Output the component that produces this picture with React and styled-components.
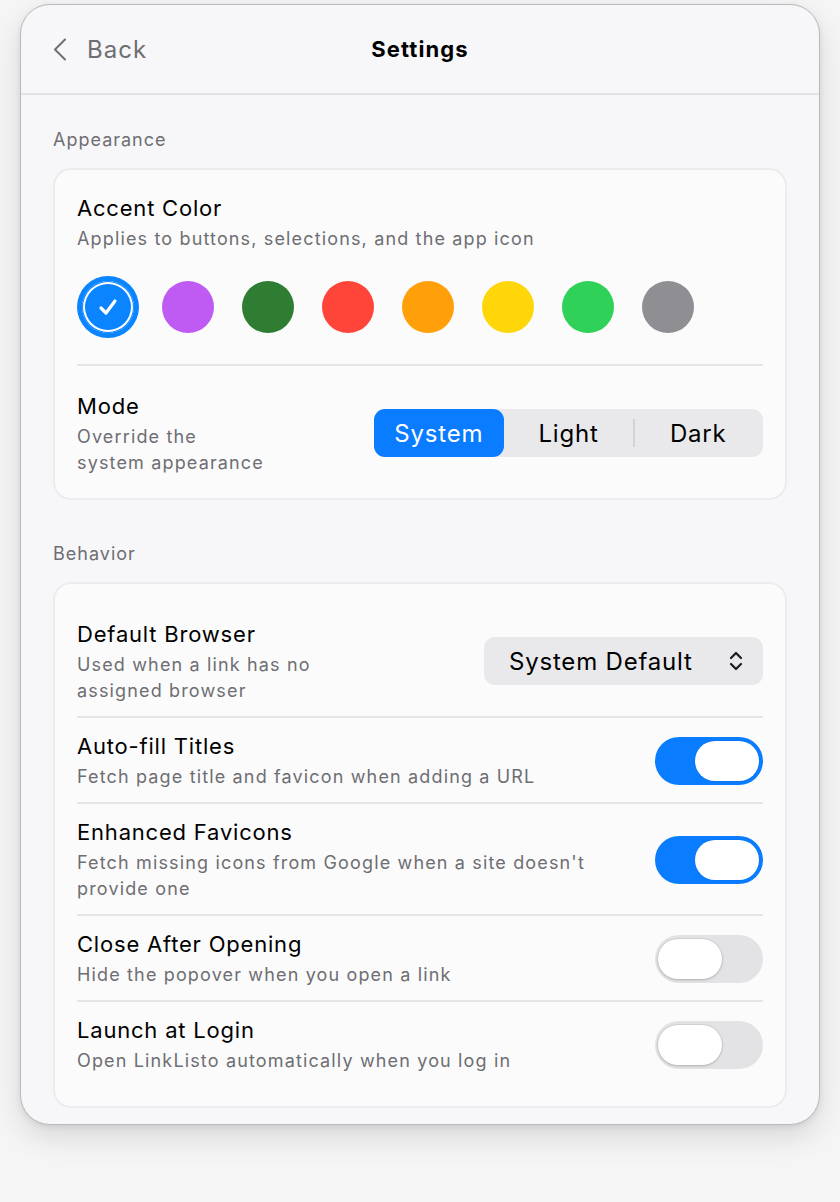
import React from 'react';
import styled, { createGlobalStyle } from 'styled-components';

const GlobalStyle = createGlobalStyle`
  html, body {
    margin: 0;
    padding: 0;
    background: #f5f5f6;
    font-family: Inter, "Noto Sans", sans-serif;
    -webkit-font-smoothing: antialiased;
  }
`;

const BLUE = '#0a7cff';

const SWATCHES = [
  '#0a84ff',
  '#bf5af2',
  '#2e7d32',
  '#ff453a',
  '#ff9f0a',
  '#ffd60a',
  '#30d158',
  '#8e8e93',
];

const BEHAVIOR = [
  {
    title: 'Auto-fill Titles',
    subtitle: 'Fetch page title and favicon when adding a URL',
    on: true,
  },
  {
    title: 'Enhanced Favicons',
    subtitle: (
      <>
        Fetch missing icons from Google when a site doesn&apos;t
        <br />
        provide one
      </>
    ),
    on: true,
  },
  {
    title: 'Close After Opening',
    subtitle: 'Hide the popover when you open a link',
    on: false,
  },
  {
    title: 'Launch at Login',
    subtitle: 'Open LinkListo automatically when you log in',
    on: false,
  },
];

const App = () => {
  const [accent, setAccent] = React.useState(0);
  const [mode, setMode] = React.useState('System');
  const [toggles, setToggles] = React.useState(BEHAVIOR.map(b => b.on));

  return (
    <Page>
      <GlobalStyle />
      <Window>
        <Header>
          <BackButton>
            <svg width="16" height="24" viewBox="0 0 16 24" fill="none">
              <path
                d="M13 2 L3 12 L13 22"
                stroke="#6e6e73"
                strokeWidth="2"
                strokeLinecap="round"
                strokeLinejoin="round"
              />
            </svg>
            <span>Back</span>
          </BackButton>
          <Title>Settings</Title>
        </Header>

        <Content>
          <SectionLabel>Appearance</SectionLabel>
          <Card>
            <AccentBlock>
              <RowTitle>Accent Color</RowTitle>
              <RowSub>Applies to buttons, selections, and the app icon</RowSub>
              <Swatches>
                {SWATCHES.map((c, i) => (
                  <Swatch
                    key={c}
                    $color={c}
                    $selected={accent === i}
                    onClick={() => setAccent(i)}
                  >
                    {accent === i && (
                      <svg width="24" height="24" viewBox="0 0 24 24" fill="none">
                        <path
                          d="M5 13 L10 18 L19 6"
                          stroke="#fff"
                          strokeWidth="3.2"
                          strokeLinecap="round"
                          strokeLinejoin="round"
                        />
                      </svg>
                    )}
                  </Swatch>
                ))}
              </Swatches>
            </AccentBlock>
            <ModeRow>
              <TextCol>
                <RowTitle>Mode</RowTitle>
                <RowSub>
                  Override the
                  <br />
                  system appearance
                </RowSub>
              </TextCol>
              <Segmented>
                {['System', 'Light', 'Dark'].map((m, i, arr) => (
                  <Segment
                    key={m}
                    $active={mode === m}
                    $divider={
                      i > 0 && mode !== m && mode !== arr[i - 1]
                    }
                    onClick={() => setMode(m)}
                  >
                    {m}
                  </Segment>
                ))}
              </Segmented>
            </ModeRow>
          </Card>

          <SectionLabel className="second">Behavior</SectionLabel>
          <Card className="behavior">
            <Row className="first">
              <TextCol>
                <RowTitle>Default Browser</RowTitle>
                <RowSub>
                  Used when a link has no
                  <br />
                  assigned browser
                </RowSub>
              </TextCol>
              <Popup>
                <span>System Default</span>
                <svg width="16" height="22" viewBox="0 0 16 22" fill="none">
                  <path
                    d="M3 8 L8 3 L13 8 M3 14 L8 19 L13 14"
                    stroke="#1d1d1f"
                    strokeWidth="2.2"
                    strokeLinecap="round"
                    strokeLinejoin="round"
                  />
                </svg>
              </Popup>
            </Row>
            {BEHAVIOR.map((b, i) => (
              <Row key={b.title}>
                <TextCol>
                  <RowTitle>{b.title}</RowTitle>
                  <RowSub>{b.subtitle}</RowSub>
                </TextCol>
                <Toggle
                  $on={toggles[i]}
                  onClick={() =>
                    setToggles(t => t.map((v, j) => (j === i ? !v : v)))
                  }
                >
                  <Knob $on={toggles[i]} />
                </Toggle>
              </Row>
            ))}
          </Card>
        </Content>
      </Window>
    </Page>
  );
};

const Page = styled.div`
  min-height: 1202px;
  padding: 4px 20px 0;
  box-sizing: border-box;
`;

const Window = styled.div`
  width: 800px;
  height: 1121px;
  box-sizing: border-box;
  background: #f7f7f9;
  border: 1px solid #b9b9bd;
  border-radius: 30px;
  box-shadow: 0 12px 30px rgba(0, 0, 0, 0.12), 0 2px 6px rgba(0, 0, 0, 0.08);
  overflow: hidden;
`;

const Header = styled.div`
  position: relative;
  height: 88px;
  display: flex;
  align-items: center;
  justify-content: center;
  border-bottom: 2px solid #e3e3e6;
`;

const BackButton = styled.button`
  position: absolute;
  left: 31px;
  top: 50%;
  transform: translateY(-50%);
  display: flex;
  align-items: center;
  gap: 19px;
  background: none;
  border: none;
  padding: 0;
  font-family: inherit;
  font-size: 24px;
  letter-spacing: 1px;
  color: #6e6e73;
  cursor: pointer;
`;

const Title = styled.h1`
  margin: 0;
  font-size: 22px;
  font-weight: 700;
  letter-spacing: 1.1px;
  color: #000;
`;

const Content = styled.div`
  padding: 34px 32px 0;
`;

const SectionLabel = styled.div`
  font-size: 18px;
  line-height: 22px;
  color: #6e6e73;
  letter-spacing: 1px;
  margin-bottom: 17px;

  &.second {
    margin-top: 43px;
  }
`;

const Card = styled.div`
  background: #fbfbfb;
  border: 2px solid #ececee;
  border-radius: 18px;
  padding: 0 22px;

  &.behavior {
    padding-top: 20px;
    padding-bottom: 20px;
  }
`;

const AccentBlock = styled.div`
  padding: 24px 0 31px;
  border-bottom: 2px solid #e5e5e7;
`;

const RowTitle = styled.div`
  font-size: 22px;
  line-height: 28px;
  letter-spacing: 0.8px;
  color: #000;
`;

const RowSub = styled.div`
  margin-top: 4px;
  font-size: 18px;
  line-height: 26px;
  color: #6e6e73;
  letter-spacing: 1.15px;
`;

const Swatches = styled.div`
  display: flex;
  gap: 28px;
  margin-top: 29px;
  padding-left: 5px;
  height: 52px;
  align-items: center;
`;

const Swatch = styled.button`
  width: 52px;
  height: 52px;
  border-radius: 50%;
  border: none;
  padding: 0;
  display: grid;
  place-items: center;
  background: ${({ $color }) => $color};
  box-shadow: ${({ $selected, $color }) =>
    $selected
      ? `0 0 0 5px ${$color}, inset 0 0 0 1px ${$color}, inset 0 0 0 3px #fff`
      : 'none'};
  cursor: pointer;
`;

const ModeRow = styled.div`
  display: flex;
  align-items: center;
  justify-content: space-between;
  padding: 26px 0 22px;
`;

const TextCol = styled.div`
  display: flex;
  flex-direction: column;
`;

const Segmented = styled.div`
  display: flex;
  width: 389px;
  height: 48px;
  background: #e9e9eb;
  border-radius: 11px;
  margin-top: -2px;
`;

const Segment = styled.button`
  flex: 1;
  position: relative;
  border: none;
  border-radius: 11px;
  font-family: inherit;
  font-size: 24px;
  letter-spacing: 0.8px;
  cursor: pointer;
  background: ${({ $active }) => ($active ? BLUE : 'transparent')};
  color: ${({ $active }) => ($active ? '#fff' : '#000')};

  &::before {
    content: '';
    display: ${({ $divider }) => ($divider ? 'block' : 'none')};
    position: absolute;
    left: 0;
    top: 10px;
    bottom: 10px;
    width: 2px;
    background: #d3d3d6;
  }
`;

const Row = styled.div`
  display: flex;
  align-items: center;
  justify-content: space-between;
  padding: 14px 0 12px;
  border-top: 2px solid #e5e5e7;

  &.first {
    border-top: none;
    padding-top: 16px;
  }
`;

const Popup = styled.button`
  display: flex;
  align-items: center;
  justify-content: space-between;
  width: 279px;
  height: 48px;
  box-sizing: border-box;
  padding: 0 19px 0 25px;
  margin-top: -2px;
  border: none;
  border-radius: 11px;
  background: #e9e9eb;
  font-family: inherit;
  font-size: 24px;
  letter-spacing: 0.8px;
  color: #000;
  cursor: pointer;
`;

const Toggle = styled.button`
  position: relative;
  width: 108px;
  height: 48px;
  border: none;
  border-radius: 24px;
  padding: 0;
  flex-shrink: 0;
  background: ${({ $on }) => ($on ? BLUE : '#e3e3e5')};
  cursor: pointer;
`;

const Knob = styled.span`
  position: absolute;
  top: 4px;
  left: ${({ $on }) => ($on ? '40px' : '3px')};
  width: 64px;
  height: 40px;
  border-radius: 20px;
  background: #fff;
  box-shadow: ${({ $on }) =>
    $on
      ? '0 0 0 1px rgba(0,0,0,0.04)'
      : '0 1px 3px rgba(0,0,0,0.18), 0 0 0 1px rgba(0,0,0,0.06)'};
`;

export default App;
